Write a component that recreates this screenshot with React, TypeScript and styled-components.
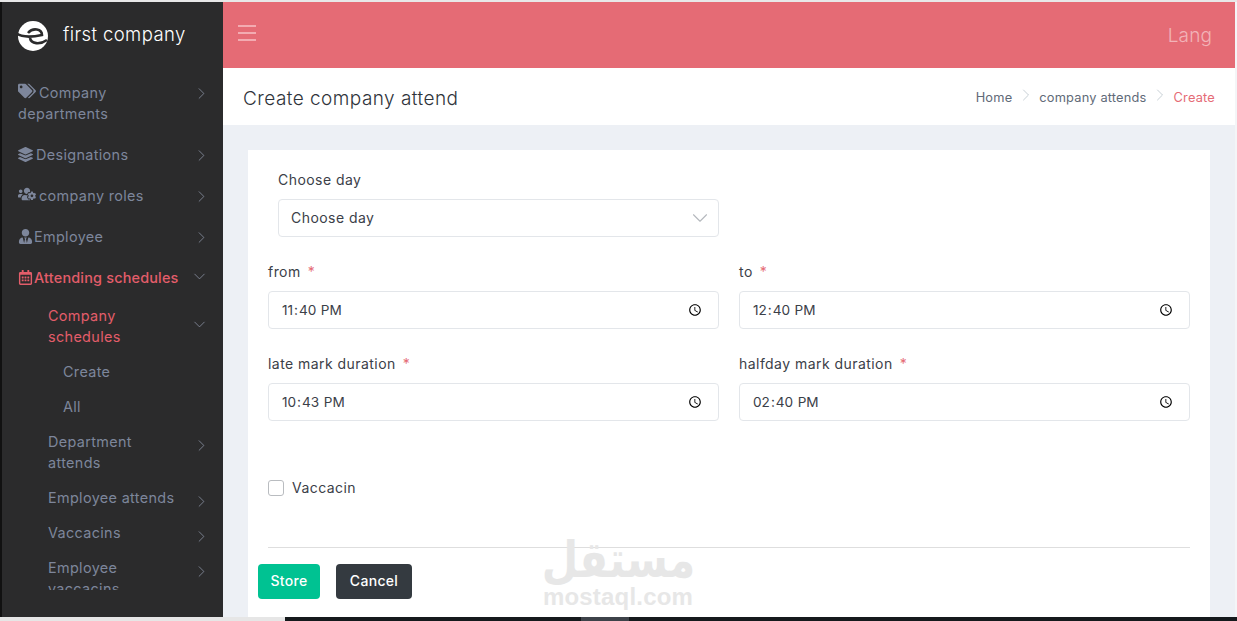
import React from 'react';
import styled, { createGlobalStyle } from 'styled-components';
import { ChevronDown, ChevronRight } from 'lucide-react';
import { FaTags, FaLayerGroup, FaUsersCog, FaUserTie, FaRegCalendarAlt } from 'react-icons/fa';

const pink = '#e56b75';
const muted = '#7d869b';

const GlobalStyle = createGlobalStyle`
    html, body {
        margin: 0;
        padding: 0;
        height: 100%;
        overflow: hidden;
        background: #f4f5f7;
    }
    * {
        box-sizing: border-box;
    }
    body {
        font-family: Inter, "Noto Sans", sans-serif;
    }
`;

const Page = styled.div`
    width: 1237px;
    height: 621px;
    display: flex;
    flex-direction: column;
    overflow: hidden;
`;

const TopEdge = styled.div`
    height: 2px;
    flex: none;
    background: #e8e8e8;
`;

const Middle = styled.div`
    flex: 1;
    min-height: 0;
    display: flex;
    padding-right: 2px;
`;

const Sidebar = styled.aside`
    width: 223px;
    flex: none;
    background: #2b2b2c;
    border-left: 2px solid #111;
    display: flex;
    flex-direction: column;
`;

const Brand = styled.div`
    height: 69.5px;
    flex: none;
    display: flex;
    align-items: center;
    padding: 0 0 2px 14px;
    gap: 13px;
    color: #fff;
    font-size: 18.5px;
    letter-spacing: 0.4px;
    font-weight: 300;
`;

const BrandName = styled.span`
    margin-top: -3px;
`;

const Nav = styled.nav`
    height: 518.5px;
    flex: none;
    overflow: hidden;
`;

const NavRow = styled.div<{ $level: number; $active?: boolean; $tall?: boolean }>`
    display: flex;
    align-items: flex-start;
    justify-content: space-between;
    padding: ${p => (p.$tall ? '10px' : '7px')} 12px ${p => (p.$tall ? '10px' : '7px')}
        ${p => [16, 46, 61][p.$level]}px;
    font-size: 14.4px;
    line-height: 21px;
    letter-spacing: ${p => (p.$active && p.$level === 0 ? 0.2 : 0.35)}px;
    color: ${p => (p.$active ? '#e35d6a' : muted)};
    font-weight: ${p => (p.$active && p.$level === 0 ? 500 : 400)};
`;

const NavLabel = styled.span<{ $width?: number; $gap?: number }>`
    display: block;
    max-width: ${p => p.$width ?? 170}px;

    svg {
        vertical-align: -2px;
        margin-right: ${p => p.$gap ?? 3}px;
    }
`;

const Arrow = styled.span<{ $shift: number; $open?: boolean }>`
    flex: none;
    display: flex;
    align-items: center;
    height: 21px;
    transform: translateY(${p => p.$shift}px);
    margin-right: ${p => (p.$open ? 2 : 0)}px;
    color: #8b93a5;
`;

const Main = styled.main`
    flex: 1;
    min-width: 0;
    display: flex;
    flex-direction: column;
    background: #edf0f5;
`;

const Topbar = styled.header`
    height: 66px;
    flex: none;
    background: ${pink};
    display: flex;
    align-items: center;
    justify-content: space-between;
    padding: 0 23px 0 15px;
`;

const Burger = styled.div`
    width: 18px;
    display: flex;
    flex-direction: column;
    gap: 5px;
    margin-bottom: 4px;

    span {
        height: 2px;
        background: #f3abb1;
    }
`;

const Lang = styled.div`
    color: #f2b3b8;
    font-size: 19px;
    font-weight: 300;
    letter-spacing: 0.1px;
`;

const TitleBar = styled.div`
    height: 57px;
    flex: none;
    background: #fff;
    display: flex;
    align-items: center;
    justify-content: space-between;
    padding: 3px 20px 0;
`;

const PageTitle = styled.h1`
    margin: 0;
    font-size: 19px;
    font-weight: 300;
    letter-spacing: 0.45px;
    color: #2f343b;
`;

const Crumbs = styled.div`
    display: flex;
    align-items: center;
    margin-top: -2px;
    font-size: 12.8px;
    letter-spacing: 0.2px;
    color: #5f6a78;
`;

const CrumbSep = styled.span`
    display: flex;
    margin: -4px 3.5px 0;
    color: #bcc6cc;
`;

const CrumbActive = styled.span`
    color: ${pink};
`;

const Content = styled.div`
    flex: 1;
    min-height: 0;
    padding: 25px 25px 0;
`;

const Card = styled.section`
    position: relative;
    height: 100%;
    background: #fff;
    padding: 20px 20px 0;
`;

const FormGrid = styled.div`
    display: grid;
    grid-template-columns: 451px 451px;
    column-gap: 20px;
    row-gap: 25px;
`;

const Field = styled.div<{ $inset?: boolean }>`
    padding-left: ${p => (p.$inset ? 10 : 0)}px;
`;

const Label = styled.label`
    display: block;
    font-size: 14px;
    line-height: 20px;
    letter-spacing: 0.45px;
    margin-bottom: 9px;
    color: #3b4048;
`;

const Req = styled.span`
    color: ${pink};
    margin-left: 7px;
`;

const controlStyle = `
    display: block;
    width: 100%;
    height: 38px;
    border: 1px solid #e3e6ea;
    border-radius: 4px;
    background-color: #fff;
    font-family: Inter, "Noto Sans", sans-serif;
    color: #3b4048;
    outline: none;
`;

const SelectWrap = styled.div`
    position: relative;
`;

const Select = styled.select`
    ${controlStyle}
    appearance: none;
    padding: 0 12px 1px;
    font-size: 14px;
    letter-spacing: 0.45px;
`;

const SelectArrow = styled.span`
    position: absolute;
    top: 6px;
    right: 6px;
    display: flex;
    color: #b4b8bd;
    pointer-events: none;
`;

const TimeInput = styled.input`
    ${controlStyle}
    padding: 0 13px 0 12px;
    font-size: 13.6px;
`;

const CheckRow = styled.label`
    display: flex;
    align-items: center;
    gap: 8px;
    margin-top: 57px;
    font-size: 14px;
    line-height: 20px;
    letter-spacing: 0.45px;
    color: #3b4048;
`;

const Check = styled.input`
    appearance: none;
    width: 16px;
    height: 16px;
    margin: 0;
    border: 1px solid #b9bcc0;
    border-radius: 3px;
    background: #fff;
`;

const Divider = styled.hr`
    border: 0;
    border-top: 1px solid #dedede;
    margin: 49px 0 16px;
`;

const Actions = styled.div`
    display: flex;
    gap: 16px;
    margin-left: -10px;
`;

const Button = styled.button<{ $dark?: boolean }>`
    height: 35px;
    width: ${p => (p.$dark ? 76 : 62)}px;
    border: 0;
    border-radius: 4px;
    padding-bottom: 3px;
    background: ${p => (p.$dark ? '#343a40' : '#00c292')};
    color: #fff;
    font-family: Inter, "Noto Sans", sans-serif;
    font-size: 14px;
    font-weight: 500;
    letter-spacing: 0.3px;
`;

const Watermark = styled.div`
    position: absolute;
    left: 295px;
    top: 385px;
    width: 150px;
    display: flex;
    flex-direction: column;
    align-items: center;
    color: #e7e7e7;
    pointer-events: none;
`;

const WatermarkArabic = styled.div`
    font-family: "DejaVu Sans", sans-serif;
    font-size: 50px;
    font-weight: 700;
    line-height: 50px;
    transform: scaleX(0.84);
`;

const WatermarkLatin = styled.div`
    font-family: "Liberation Sans", sans-serif;
    font-size: 24px;
    font-weight: 700;
    line-height: 24px;
    letter-spacing: 0.2px;
`;

const BottomEdge = styled.div`
    height: 4px;
    flex: none;
    display: flex;
    background: #15191c;
`;

const BottomPiece = styled.div<{ $w: number; $color: string }>`
    width: ${p => p.$w}px;
    background: ${p => p.$color};
`;

const Logo = () => (
	<svg width="34" height="32" viewBox="0 0 34 32">
		<circle cx="17" cy="16" r="15" fill="#fff" />
		<path d="M0 13 C5 17 12 18 26 15 C26 9 17 7 12 13" fill="none" stroke="#2b2b2c" strokeWidth="2.6" />
		<path d="M14 18 C15 24 24 25 31 20" fill="none" stroke="#2b2b2c" strokeWidth="2.6" />
	</svg>
);

type TopItemProps = { icon: React.ReactNode; text: string; active?: boolean; width?: number; gap?: number };

const TopItem = ({ icon, text, active, width, gap }: TopItemProps) => (
	<NavRow $level={0} $active={active} $tall>
		<NavLabel $width={width} $gap={gap}>{icon}{text}</NavLabel>
		<Arrow $shift={active ? -1 : 1} $open={active}>
			{active
				? <ChevronDown size={19} strokeWidth={1} />
				: <ChevronRight size={19} strokeWidth={1} />}
		</Arrow>
	</NavRow>
);

const SubItem = ({ text, width }: { text: string; width?: number }) => (
	<NavRow $level={1}>
		<NavLabel $width={width}>{text}</NavLabel>
		<Arrow $shift={4}><ChevronRight size={19} strokeWidth={1} /></Arrow>
	</NavRow>
);

const TimeField = ({ label, value }: { label: string; value: string }) => (
	<Field>
		<Label>{label}<Req>*</Req></Label>
		<TimeInput type="time" defaultValue={value} />
	</Field>
);

const App = (): JSX.Element => (
	<Page>
		<GlobalStyle />
		<TopEdge />
		<Middle>
			<Sidebar>
				<Brand><Logo /><BrandName>first company</BrandName></Brand>
				<Nav>
					<TopItem icon={<FaTags size={18} />} text="Company departments" width={130} />
					<TopItem icon={<FaLayerGroup size={15} />} text="Designations" />
					<TopItem icon={<FaUsersCog size={18} />} text="company roles" />
					<TopItem icon={<FaUserTie size={15} />} text="Employee" gap={1} />
					<TopItem icon={<FaRegCalendarAlt size={15} />} text="Attending schedules" gap={1} active />
					<NavRow $level={1} $active>
						<NavLabel $width={90}>Company schedules</NavLabel>
						<Arrow $shift={9} $open><ChevronDown size={19} strokeWidth={1} /></Arrow>
					</NavRow>
					<NavRow $level={2}>Create</NavRow>
					<NavRow $level={2}>All</NavRow>
					<SubItem text="Department attends" width={110} />
					<SubItem text="Employee attends" />
					<SubItem text="Vaccacins" />
					<SubItem text="Employee vaccacins" width={110} />
				</Nav>
			</Sidebar>
			<Main>
				<Topbar>
					<Burger><span /><span /><span /></Burger>
					<Lang>Lang</Lang>
				</Topbar>
				<TitleBar>
					<PageTitle>Create company attend</PageTitle>
					<Crumbs>
						Home
						<CrumbSep><ChevronRight size={20} strokeWidth={1} /></CrumbSep>
						company attends
						<CrumbSep><ChevronRight size={20} strokeWidth={1} /></CrumbSep>
						<CrumbActive>Create</CrumbActive>
					</Crumbs>
				</TitleBar>
				<Content>
					<Card>
						<FormGrid>
							<Field $inset>
								<Label>Choose day</Label>
								<SelectWrap>
									<Select defaultValue="">
										<option value="">Choose day</option>
									</Select>
									<SelectArrow><ChevronDown size={26} strokeWidth={1} /></SelectArrow>
								</SelectWrap>
							</Field>
							<div />
							<TimeField label="from" value="23:40" />
							<TimeField label="to" value="12:40" />
							<TimeField label="late mark duration" value="22:43" />
							<TimeField label="halfday mark duration" value="14:40" />
						</FormGrid>
						<CheckRow><Check type="checkbox" />Vaccacin</CheckRow>
						<Divider />
						<Actions>
							<Button>Store</Button>
							<Button $dark>Cancel</Button>
						</Actions>
						<Watermark>
							<WatermarkArabic dir="rtl">مستقل</WatermarkArabic>
							<WatermarkLatin>mostaql.com</WatermarkLatin>
						</Watermark>
					</Card>
				</Content>
			</Main>
		</Middle>
		<BottomEdge>
			<BottomPiece $w={285} $color="#e6e6e6" />
			<BottomPiece $w={296} $color="#15191c" />
			<BottomPiece $w={48} $color="#3d4249" />
		</BottomEdge>
	</Page>
);

export default App;
